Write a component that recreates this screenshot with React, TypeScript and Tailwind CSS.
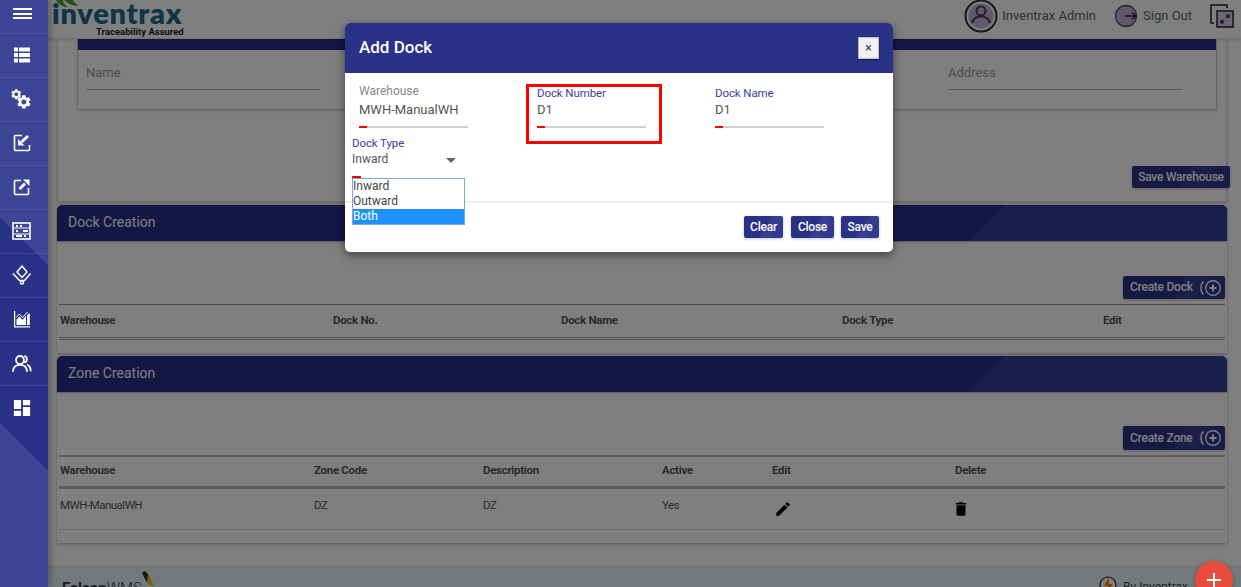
import React from 'react';

const GEAR =
  'M19.14 12.94c.04-.3.06-.61.06-.94 0-.32-.02-.64-.07-.94l2.03-1.58c.18-.14.23-.41.12-.61l-1.92-3.32c-.12-.22-.37-.29-.59-.22l-2.39.96c-.5-.38-1.03-.7-1.62-.94l-.36-2.54c-.04-.24-.24-.41-.48-.41h-3.84c-.24 0-.43.17-.47.41l-.36 2.54c-.59.24-1.13.57-1.62.94l-2.39-.96c-.22-.08-.47 0-.59.22L2.74 8.87c-.12.21-.08.47.12.61l2.03 1.58c-.05.3-.09.63-.09.94s.02.64.07.94l-2.03 1.58c-.18.14-.23.41-.12.61l1.92 3.32c.12.22.37.29.59.22l2.39-.96c.5.38 1.03.7 1.62.94l.36 2.54c.05.24.24.41.48.41h3.84c.24 0 .44-.17.47-.41l.36-2.54c.59-.24 1.13-.56 1.62-.94l2.39.96c.22.08.47 0 .59-.22l1.92-3.32c.12-.22.07-.47-.12-.61l-2.01-1.58zM12 15.6c-1.98 0-3.6-1.62-3.6-3.6s1.62-3.6 3.6-3.6 3.6 1.62 3.6 3.6-1.62 3.6-3.6 3.6z';

const sideIcons: React.ReactNode[] = [
  // list
  <svg key="list" width="18" height="18" viewBox="0 0 18 18" fill="white">
    <path d="M1 1.5h4v4H1zM6 1.5h11v4H6zM1 7h4v4H1zM6 7h11v4H6zM1 12.5h4v4H1zM6 12.5h11v4H6z" />
  </svg>,
  // gears
  <svg key="gears" width="21" height="21" viewBox="0 0 21 21" fill="white">
    <path d={GEAR} transform="translate(-1 -1) scale(0.52)" />
    <path d={GEAR} transform="translate(4.500 4.500) scale(0.7)" />
  </svg>,
  // import
  <svg key="import" width="18" height="18" viewBox="0 0 18 18" fill="none" stroke="white" strokeWidth="1.6">
    <path d="M9 1.500H2.500a1 1 0 0 0-1 1v13a1 1 0 0 0 1 1h13a1 1 0 0 0 1-1V11" />
    <path d="M15 2 8.500 8" strokeWidth="2.8" />
    <path d="M5 5v6.500h6.500z" fill="white" stroke="none" />
  </svg>,
  // export
  <svg key="export" width="18" height="18" viewBox="0 0 18 18" fill="none" stroke="white" strokeWidth="1.6">
    <path d="M8 2.500H2.500a1 1 0 0 0-1 1v12a1 1 0 0 0 1 1h12a1 1 0 0 0 1-1V10" />
    <path d="M6.500 11 12 5.500" strokeWidth="2.8" />
    <path d="M16.500 1.500v6.500l-6.500-6.500z" fill="white" stroke="none" />
  </svg>,
  // abacus
  <svg key="abacus" width="19" height="18" viewBox="0 0 19 18" fill="none" stroke="white" strokeWidth="1.6">
    <rect x="1" y="1" width="17" height="16" />
    <path d="M1 6h17M1 12h17" strokeWidth="1" />
    <path d="M4 4h2M8 4h2M4 9h2M11 9h5M4 14h6M12 14h2" strokeWidth="2" />
  </svg>,
  // diamond on a trolley
  <svg key="diamond" width="20" height="20" viewBox="0 0 20 20" fill="none" stroke="white" strokeWidth="1.5">
    <path d="M10 1l5 6-5 5.500L5 7z" />
    <path d="M1 8.500l6.500 7h5l6-7" />
    <circle cx="10" cy="17.500" r="1.600" />
  </svg>,
  // chart
  <svg key="chart" width="18" height="18" viewBox="0 0 18 18" fill="white">
    <path d="M1 1h1.200v15.300H17v1.200H1z" />
    <path d="M3.500 15V9.500l3-3 3 3.500 3.500-4.500V15zM14 15V5l2.800-2V15z" />
    <path d="M3 7.500 6.500 4l3 3.500L14.500 2" fill="none" stroke="white" strokeWidth="1" />
  </svg>,
  // users
  <svg key="users" width="20" height="18" viewBox="0 0 20 18" fill="none" stroke="white" strokeWidth="1.8" strokeLinecap="round">
    <circle cx="8" cy="6" r="4" />
    <path d="M1 17c.4-4 3-6.200 7-6.200s6.600 2.200 7 6.200" />
    <path d="M13 2.200c2.200.6 2.900 4.700 0 6.200M15.800 11c1.700.9 2.700 3 2.900 5.500" />
  </svg>,
  // dashboard
  <svg key="dash" width="18" height="18" viewBox="2 2 20 20" fill="white">
    <path d="M3 13h8V3H3v10zm0 8h8v-6H3v6zm10 0h8V11h-8v10zm0-18v6h8V3h-8z" />
  </svg>,
];

const Sidebar = () => (
  <aside className="relative z-20 w-[48px] shrink-0 bg-[linear-gradient(45deg,#3d4596_116px,#2a3287_116px,#2a3287_261px,#3d4596_261px)] shadow-[3px_0_6px_rgba(0,0,0,0.25)]">
    <div className="flex h-[34px] items-start border-b border-white/10 pl-[13px] pt-[8px]">
      <div className="flex w-[19px] flex-col gap-[2.500px]">
        <span className="h-[2px] bg-white" />
        <span className="h-[2px] bg-white" />
        <span className="h-[2px] bg-white" />
      </div>
    </div>
    {sideIcons.map((icon, i) => (
      <div key={i} className="flex h-[44px] items-center justify-center border-b border-white/10 pb-[1px] pr-[5px] last:border-b-0">
        {icon}
      </div>
    ))}
  </aside>
);

const TopBar = () => (
  <header className="relative z-10 flex h-[39px] shrink-0 items-start border-b border-[#e4e4e4] bg-white pl-[4px] shadow-[0_1px_3px_rgba(0,0,0,0.15)]">
    <div className="relative h-[38px] w-[136px] overflow-hidden">
      <svg className="absolute left-[2px] top-0" width="26" height="8" viewBox="0 0 26 8">
        <path d="M2 0c2 4 6 7 12 7C10 4 9 2 9 0zM10 0c3 3 9 6 15 6-3-2-5-4-6-6z" fill="#4f9f2f" />
      </svg>
      <div className="absolute left-0 top-0 font-['Lato',sans-serif] text-[29px] leading-[26px] font-extrabold tracking-[0.7px] text-[#1f6d8e]">
        inventrax
      </div>
      <div className="absolute left-[44px] top-[26px] whitespace-nowrap font-['Roboto',sans-serif] text-[9.500px] leading-[12px] font-bold text-[#222]">
        Traceability Assured
      </div>
    </div>
    <div className="ml-auto flex h-[31px] items-center font-['Roboto',sans-serif] text-[13px] text-[#5a6872]">
      <svg width="34" height="34" viewBox="0 0 34 34" fill="none" stroke="#444" strokeWidth="1.500">
        <circle cx="17" cy="17" r="15.500" stroke="#333" strokeWidth="2" />
        <circle cx="17" cy="17" r="12.500" fill="#c3b3e0" stroke="none" />
        <circle cx="17" cy="12" r="4.500" strokeWidth="2" />
        <path d="M8 24c1.500-5 5-6.500 9-6.500s7.500 1.500 9 6.500" strokeWidth="2" />
      </svg>
      <span className="ml-[4px]">Inventrax Admin</span>
      <svg className="ml-[19px]" width="22" height="24" viewBox="0 0 22 24" fill="none" stroke="#555" strokeWidth="1.300">
        <circle cx="11" cy="12" r="10.500" fill="#c0b0dc" />
        <path d="M10 12h11M17 8.500l4 3.500-4 3.500" stroke="#222" />
      </svg>
      <span className="ml-[6px]">Sign Out</span>
      <svg className="ml-[18px] mr-[7px]" width="24" height="24" viewBox="0 0 24 24" fill="none" stroke="#222" strokeWidth="1.500">
        <path d="M1 15V1h16v3" />
        <path d="M1 15v4h3" />
        <rect x="7" y="7" width="16" height="16" fill="#d8cdea" />
        <path d="M11 19l3-3M11 16v3h3M19 11l-3 3M16 11h3v3" strokeWidth="1.200" />
      </svg>
    </div>
  </header>
);

const ActionButton = ({ label, plus = false, className = '' }: { label: string; plus?: boolean; className?: string }) => (
  <button
    type="button"
    className={`flex items-center justify-between rounded-[2px] bg-[linear-gradient(120deg,#2a3287_55%,#363e92_55%,#363e92_75%,#2f3a90_75%)] font-['Roboto',sans-serif] text-[12px] font-medium tracking-[-0.25px] text-white shadow-[0_1px_3px_rgba(0,0,0,0.25)] ${className}`}
  >
    <span className="pb-[1px]">{label}</span>
    {plus && (
      <svg width="23" height="18" viewBox="0 0 23 18" fill="none" stroke="white" strokeWidth="1.400">
        <circle cx="14" cy="9" r="7.300" />
        <path d="M14 5.500v7M10.500 9h7" strokeWidth="2" />
        <path d="M4.500 2.500C1 5.500 1 12.500 4.500 15.500" />
      </svg>
    )}
  </button>
);

const SectionHeader = ({ title }: { title: string }) => (
  <div className="flex h-[36px] items-center rounded-t-[5px] bg-[linear-gradient(135deg,#282f8c_670px,#343c96_670px)] pb-[2px] pl-[11px] font-['Roboto',sans-serif] text-[14px] text-white shadow-[0_1px_2px_rgba(0,0,0,0.3)]">
    {title}
  </div>
);

const th = "font-['Roboto',sans-serif] text-[11.500px] font-bold tracking-[-0.3px] text-[#555]";

const DockSection = () => (
  <section className="mt-[3px] bg-white shadow-[0_1px_3px_rgba(0,0,0,0.3)]">
    <SectionHeader title="Dock Creation" />
    <div className="h-[112px] px-[2px]">
      <div className="flex justify-end pt-[35px]">
        <ActionButton label="Create Dock" plus className="h-[23px] w-[102px] pl-[7px] pr-[3px]" />
      </div>
      <div className="mt-[5px] grid h-[33px] grid-cols-[273px_228px_281px_261px_1fr] items-center border-t border-[#999]">
        {['Warehouse', 'Dock No.', 'Dock Name', 'Dock Type', 'Edit'].map((h) => (
          <span key={h} className={`${th} pl-[1px]`}>
            {h}
          </span>
        ))}
      </div>
      <div className="h-[3px] border-y border-[#aaa]" />
    </div>
  </section>
);

const ZoneSection = () => (
  <section className="mt-[3px] bg-white shadow-[0_1px_3px_rgba(0,0,0,0.3)]">
    <SectionHeader title="Zone Creation" />
    <div className="h-[151px] px-[2px]">
      <div className="flex justify-end pt-[34px]">
        <ActionButton label="Create Zone" plus className="h-[24px] w-[102px] pl-[7px] pr-[3px]" />
      </div>
      <div className="mt-[5px] grid h-[31px] grid-cols-[254px_169px_179px_110px_183px_1fr] items-center border-t-2 border-[#bbb] pb-[2px]">
        {['Warehouse', 'Zone Code', 'Description', 'Active', 'Edit', 'Delete'].map((h) => (
          <span key={h} className={`${th} pl-[1px]`}>
            {h}
          </span>
        ))}
      </div>
      <div className="h-[3px] bg-[#bbb]" />
      <div className="grid h-[41px] grid-cols-[254px_169px_179px_110px_183px_1fr] border-b border-[#ddd] pt-[8px] font-['Roboto',sans-serif] text-[11.500px] leading-[16px] tracking-[-0.5px] text-[#555]">
        <span className="pl-[1px]">MWH-ManualWH</span>
        <span className="pl-[1px]">DZ</span>
        <span className="pl-[1px]">DZ</span>
        <span className="pl-[1px]">Yes</span>
        <span>
          <svg className="ml-[3px] mt-[3px]" width="18" height="18" viewBox="0 0 24 24" fill="#000">
            <path d="M3 17.250V21h3.750L17.810 9.940l-3.750-3.750L3 17.250zM20.710 7.040c.39-.39.39-1.020 0-1.410l-2.340-2.340c-.39-.39-1.020-.39-1.410 0l-1.830 1.830 3.750 3.750 1.830-1.830z" />
          </svg>
        </span>
        <span>
          <svg className="mt-[3px] -ml-[2px]" width="18" height="18" viewBox="0 0 24 24" fill="#000">
            <path d="M6 19c0 1.100.9 2 2 2h8c1.100 0 2-.9 2-2V7H6v12zM19 4h-3.500l-1-1h-5l-1 1H5v2h14V4z" />
          </svg>
        </span>
      </div>
    </div>
  </section>
);

const Footer = () => (
  <footer className="mt-auto flex h-[22px] items-start justify-between overflow-hidden bg-[#e8f3fa] pl-[14px] pr-[53px] pt-[14px] font-['Roboto',sans-serif]">
    <div className="flex items-start">
      <span className="text-[15px] leading-[18px] text-[#2a3a55]">
        <b>Falcon</b>
        <span className="font-light">WMS</span>
      </span>
      <svg className="-ml-[2px] -mt-[8px]" width="16" height="18" viewBox="0 0 16 18">
        <path d="M2 2l3-2 4 4 5 11-4-1z" fill="#f0c020" />
        <path d="M2 2l3-2 3 3-1 7 3 4-4-4z" fill="#333" />
      </svg>
    </div>
    <div className="flex items-start text-[12px] leading-[16px] text-[#444]">
      <svg className="-mt-[3px] mr-[6px]" width="18" height="18" viewBox="0 0 18 18">
        <circle cx="9" cy="9" r="8" fill="white" stroke="#222" strokeWidth="1.200" />
        <path d="M10 1 5 10h4l-1 7 6-9h-4z" fill="#f08a00" />
      </svg>
      By Inventrax
    </div>
  </footer>
);

const FieldLine = () => (
  <div className="relative mt-[6px] h-[2px] w-[109px] bg-[#cfcfcf]">
    <span className="absolute left-0 top-0 h-[2px] w-[8px] bg-[#ff0000]" />
  </div>
);

const Field = ({ label, value, active = true }: { label: string; value: string; active?: boolean }) => (
  <div className="w-[178px]">
    <div className={active ? 'h-[14px] pt-[3px] text-[11.500px] leading-[14px] tracking-[-0.1px] text-[#3a429a]' : 'h-[14px] pt-[1px] text-[12px] leading-[14px] text-[#888]'}>
      {label}
    </div>
    <div className="mt-[3px] h-[20px] text-[13px] leading-[20px] text-[#555]">{value}</div>
    <FieldLine />
  </div>
);

const AddDockModal = () => (
  <div className="absolute left-[345px] top-[23px] z-30 h-[229px] w-[548px] rounded-[5px] bg-white font-['Roboto',sans-serif] shadow-[0_3px_10px_rgba(0,0,0,0.5)]">
    <div className="flex h-[50px] items-center justify-between rounded-t-[5px] bg-[#2a3287] pl-[14px] pr-[14px]">
      <h4 className="text-[17px] font-medium text-white">Add Dock</h4>
      <button type="button" className="flex h-[22px] w-[21px] items-center justify-center border border-[#bbb] bg-[#f1f1f1] text-[12px] leading-none text-[#333] shadow-[0_1px_2px_rgba(0,0,0,0.4)]">
        ×
      </button>
    </div>
    <div className="relative h-[130px] border-b-2 border-[#eee] pl-[14px] pt-[10px]">
      <div className="flex">
        <Field label="Warehouse" value="MWH-ManualWH" active={false} />
        <Field label="Dock Number" value="D1" />
        <Field label="Dock Name" value="D1" />
      </div>
      <div className="-ml-[7px] mt-[8px] w-[113px]">
        <div className="h-[14px] text-[11.500px] leading-[14px] tracking-[-0.1px] text-[#3a429a]">Dock Type</div>
        <div className="flex h-[18px] items-center justify-between pr-[9px] text-[12px] text-[#555]">
          Inward
          <span className="mt-[2px] border-x-[5px] border-t-[5px] border-x-transparent border-t-[#666]" />
        </div>
      </div>
      {/* red annotation round the dock number */}
      <div className="absolute left-[181px] top-[11px] h-[60px] w-[136px] border-[3px] border-[#ff0000]" />
      {/* open select list */}
      <span className="absolute left-[7px] top-[103px] h-[2px] w-[9px] bg-[#ff0000]" />
      <ul className="absolute left-[7px] top-[105px] z-10 w-[113px] border border-[#7aa5e0] bg-white text-[12px] leading-[15px] text-[#444]">
        <li>Inward</li>
        <li>Outward</li>
        <li className="bg-[#1e90ff] text-white">Both</li>
      </ul>
    </div>
    <div className="flex justify-end gap-[7px] pr-[14px] pt-[13px]">
      <ActionButton label="Clear" className="mr-[1px] h-[22px] w-[39px] justify-center!" />
      <ActionButton label="Close" className="h-[22px] w-[43px] justify-center!" />
      <ActionButton label="Save" className="h-[22px] w-[38px] justify-center!" />
    </div>
  </div>
);

export default function App() {
  return (
    <div className="relative flex h-[587px] w-[1241px] overflow-hidden bg-white">
      <Sidebar />
      <div className="flex min-w-0 flex-1 flex-col">
        <TopBar />
        <main className="ml-[9px] mr-[14px] flex flex-col">
          <section className="h-[163px] border-x border-b border-[#ddd] bg-white shadow-[0_1px_3px_rgba(0,0,0,0.2)]">
            <div className="ml-[19px] mr-[9px] border-x border-b border-[#ccc] shadow-[0_1px_3px_rgba(0,0,0,0.15)]">
              <div className="h-[11px] bg-[linear-gradient(135deg,#282f8c_918px,#343c96_918px)]" />
              <div className="flex h-[59px] justify-between pl-[8px] pr-[34px] pt-[13px] font-['Roboto',sans-serif] text-[13px] text-[#999]">
                {['Name', 'Address'].map((label) => (
                  <div key={label} className="h-[27px] w-[234px] border-b border-[#bbb]">
                    {label}
                  </div>
                ))}
              </div>
            </div>
            <div className="-mr-[4px] flex justify-end pt-[56px]">
              <ActionButton label="Save Warehouse" className="h-[22px] w-[98px] justify-center!" />
            </div>
          </section>
          <DockSection />
          <ZoneSection />
        </main>
        <Footer />
      </div>
      {/* backdrop leaves the side nav undimmed */}
      <div className="absolute inset-0 z-10 bg-black/50" />
      <AddDockModal />
      <button type="button" className="absolute left-[1195px] top-[561px] z-20 flex h-[38px] w-[38px] items-center justify-center rounded-full bg-[#e74c3c] shadow-[0_1px_4px_rgba(0,0,0,0.3)]">
        <svg className="-mt-[1px]" width="14" height="14" viewBox="0 0 14 14" stroke="white" strokeWidth="2">
          <path d="M7 0v14M0 7h14" />
        </svg>
      </button>
    </div>
  );
}
